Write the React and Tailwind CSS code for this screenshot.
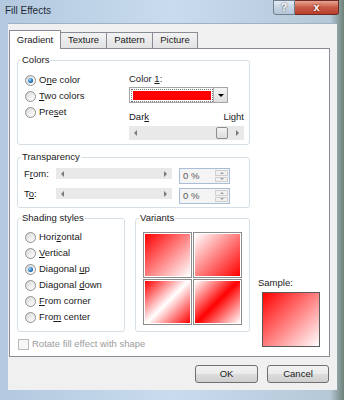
import React from "react";

const Radio = ({ checked }) => (
    <span className="flex h-[11px] w-[11px] shrink-0 items-center justify-center rounded-full border border-[#8e8f8f] bg-[linear-gradient(135deg,#d4d4d4,#f7f7f7_70%,#ffffff)]">
        {checked && (
            <span className="h-[5px] w-[5px] rounded-full bg-[radial-gradient(circle_at_35%_35%,#9fd8ff,#1c6fb5_60%,#0d3d6e)]" />
        )}
    </span>
);

const RadioRow = ({ checked, children }) => (
    <div className="flex h-[16px] items-center gap-[3px]">
        <Radio checked={checked} />
        <span>{children}</span>
    </div>
);

const Group = ({ label, className, children }) => (
    <div className={`relative rounded-[3px] border border-[#d5dfe5] ${className}`}>
        <span className="absolute -top-[8px] left-[3px] bg-white px-[1px] leading-[14px]">
            {label}
        </span>
        {children}
    </div>
);

const LeftArrow = () => (
    <span className="h-0 w-0 border-y-[3px] border-r-[3px] border-y-transparent border-r-[#7a7a7a]" />
);
const RightArrow = () => (
    <span className="h-0 w-0 border-y-[3px] border-l-[3px] border-y-transparent border-l-[#7a7a7a]" />
);

const Slider = ({ thumb, className }) => (
    <div className={`relative flex items-center justify-between bg-[#e9e9e9] px-[5px] ${className}`}>
        <LeftArrow />
        <RightArrow />
        {thumb && (
            <span className="absolute right-[16px] top-[1px] h-[12px] w-[12px] rounded-[2px] border border-[#8d8d8d] bg-[linear-gradient(180deg,#f5f5f5,#dcdcdc)]" />
        )}
    </div>
);

const Spin = () => (
    <div className="flex h-[16px] w-[51px] border border-[#a9bdd6] bg-[#f4f4f4]">
        <span className="flex-1 pl-[3px] leading-[14px] text-[#5a5a5a]">0 %</span>
        <div className="my-[1px] mr-[1px] flex w-[13px] flex-col gap-[1px]">
            <span className="flex flex-1 items-center justify-center border border-[#cfcfcf] bg-[#f0f0f0]">
                <span className="h-0 w-0 border-x-[2px] border-b-[2px] border-x-transparent border-b-[#a0a0a0]" />
            </span>
            <span className="flex flex-1 items-center justify-center border border-[#cfcfcf] bg-[#f0f0f0]">
                <span className="h-0 w-0 border-x-[2px] border-t-[2px] border-x-transparent border-t-[#a0a0a0]" />
            </span>
        </div>
    </div>
);

const Variant = ({ bg }) => (
    <div className="h-[46px] border border-[#8c8c8c] bg-white p-[1px]">
        <div className={`h-full w-full ${bg}`} />
    </div>
);

const App = () => {
    return (
        <div className="h-[400px] w-[344px] overflow-hidden bg-[linear-gradient(90deg,#b3c9df,#c9dcee_50%,#b5c8d8_96%,#6e8279)] font-['Liberation_Sans',Arial,sans-serif] text-[9.5px] text-[#1a1a1a]">
            {/* title bar */}
            <div className="flex h-[23px] items-start justify-between">
                <span className="pl-[5px] pt-[5px] text-[10px] leading-[12px] text-[#1f2a36]">
                    Fill Effects
                </span>
                <div className="mr-[5px] flex">
                    <span className="flex h-[15px] w-[22px] items-center justify-center rounded-bl-[3px] border border-[#6f7d8c] bg-[linear-gradient(180deg,#e3ecf5,#c5d4e3_50%,#b4c6da)] text-[10px] font-bold leading-none text-white [text-shadow:0_0_2px_#333]">
                        ?
                    </span>
                    <span className="flex h-[15px] w-[44px] items-center justify-center rounded-br-[3px] border border-l-0 border-[#6b2a24] bg-[linear-gradient(180deg,#e8a493,#c75a45_50%,#b8402b)] text-[11px] font-bold leading-none text-white [text-shadow:0_0_2px_#400]">
                        x
                    </span>
                </div>
            </div>

            {/* client */}
            <div className="ml-[8px] h-[367px] w-[329px] border-t border-[#9fb1c4] bg-[#f0f0f0]">
                {/* tabs */}
                <div className="ml-[1px] flex h-[24px] items-end">
                    <div className="relative z-10 -mb-[1px] flex h-[19px] w-[52px] items-center justify-center border border-b-0 border-[#898c95] bg-white">
                        Gradient
                    </div>
                    <div className="flex h-[16px] w-[46px] items-center justify-center border border-b-0 border-l-0 border-[#898c95] bg-[linear-gradient(180deg,#f2f2f2,#e3e3e3)]">
                        Texture
                    </div>
                    <div className="flex h-[16px] w-[46px] items-center justify-center border border-b-0 border-l-0 border-[#898c95] bg-[linear-gradient(180deg,#f2f2f2,#e3e3e3)]">
                        Pattern
                    </div>
                    <div className="flex h-[16px] w-[45px] items-center justify-center border border-b-0 border-l-0 border-[#898c95] bg-[linear-gradient(180deg,#f2f2f2,#e3e3e3)]">
                        Picture
                    </div>
                </div>

                {/* panel */}
                <div className="ml-[1px] h-[309px] w-[321px] border border-[#898c95] bg-white pl-[7px] pt-[11px]">
                    <Group label="Colors" className="flex h-[85px] w-[233px]">
                        <div className="w-[111px] pl-[7px] pt-[11px]">
                            <RadioRow checked>
                                O<u>n</u>e color
                            </RadioRow>
                            <RadioRow>
                                <u>T</u>wo colors
                            </RadioRow>
                            <RadioRow>
                                Pre<u>s</u>et
                            </RadioRow>
                        </div>
                        <div className="w-[115px] pt-[11px]">
                            <div className="leading-[14px]">
                                Color <u>1</u>:
                            </div>
                            <div className="mt-[1px] flex h-[16px] w-[99px] border border-[#a5a5a5] bg-white">
                                <div className="flex flex-1 items-center justify-center">
                                    <div className="border border-dotted border-[#777] p-[1px]">
                                        <div className="h-[9px] w-[78px] bg-[#ff0000]" />
                                    </div>
                                </div>
                                <div className="flex w-[14px] items-center justify-center border-l border-[#b0b0b0] bg-[linear-gradient(180deg,#f4f4f4,#dedede)]">
                                    <span className="h-0 w-0 border-x-[3px] border-t-[3px] border-x-transparent border-t-black" />
                                </div>
                            </div>
                            <div className="mt-[7px] flex justify-between leading-[14px]">
                                <span>
                                    Dar<u>k</u>
                                </span>
                                <span>Light</span>
                            </div>
                            <Slider thumb className="mt-[2px] h-[14px] w-[115px]" />
                        </div>
                    </Group>

                    <Group label="Transparency" className="mt-[12px] h-[51px] w-[233px] pl-[6px] pt-[10px]">
                        <div className="flex h-[16px] items-start">
                            <span className="w-[32px] leading-[12px]">
                                F<u>r</u>om:
                            </span>
                            <Slider className="h-[11px] w-[116px]" />
                            <div className="ml-[7px]">
                                <Spin />
                            </div>
                        </div>
                        <div className="mt-[4px] flex h-[16px] items-start">
                            <span className="w-[32px] leading-[12px]">
                                T<u>o</u>:
                            </span>
                            <Slider className="h-[11px] w-[116px]" />
                            <div className="ml-[7px]">
                                <Spin />
                            </div>
                        </div>
                    </Group>

                    <div className="mt-[10px] flex">
                        <div>
                            <div className="flex">
                                <Group label="Shading styles" className="h-[114px] w-[108px] pl-[7px] pt-[10px]">
                                    <RadioRow>
                                        Hori<u>z</u>ontal
                                    </RadioRow>
                                    <RadioRow>
                                        <u>V</u>ertical
                                    </RadioRow>
                                    <RadioRow checked>
                                        Diagonal <u>u</u>p
                                    </RadioRow>
                                    <RadioRow>
                                        Diagonal <u>d</u>own
                                    </RadioRow>
                                    <RadioRow>
                                        <u>F</u>rom corner
                                    </RadioRow>
                                    <RadioRow>
                                        Fro<u>m</u> center
                                    </RadioRow>
                                </Group>
                                <Group label="Variants" className="ml-[10px] h-[114px] w-[115px] pl-[7px] pt-[13px]">
                                    <div className="grid w-[99px] grid-cols-2 gap-[1px]">
                                        <Variant bg="bg-[linear-gradient(135deg,#ff0000,#ffffff)]" />
                                        <Variant bg="bg-[linear-gradient(135deg,#ffffff,#ff0000)]" />
                                        <Variant bg="bg-[linear-gradient(135deg,#ff0000,#ffffff_50%,#ff0000)]" />
                                        <Variant bg="bg-[linear-gradient(135deg,#ffffff,#ff0000_50%,#ffffff)]" />
                                    </div>
                                </Group>
                            </div>
                            <div className="ml-[1px] mt-[5px] flex items-center gap-[3px] text-[#9c9c9c]">
                                <span className="h-[11px] w-[11px] border border-[#b9b9b9] bg-[#f6f6f6]" />
                                <span>Rotate fill effect with shape</span>
                            </div>
                        </div>
                        <div className="ml-[8px] pt-[58px]">
                            <div className="leading-[14px]">Sample:</div>
                            <div className="ml-[4px] mt-[2px] h-[55px] w-[58px] border border-[#5a5a5a] bg-[linear-gradient(135deg,#ff0000,#ffffff)]" />
                        </div>
                    </div>
                </div>

                {/* buttons */}
                <div className="mt-[8px] flex justify-end gap-[9px] pr-[8px]">
                    <button className="h-[18px] w-[63px] rounded-[3px] border border-[#707070] bg-[linear-gradient(180deg,#f2f2f2,#ebebeb_50%,#dddddd_51%,#cfcfcf)] text-[9.5px]">
                        OK
                    </button>
                    <button className="h-[18px] w-[62px] rounded-[3px] border border-[#707070] bg-[linear-gradient(180deg,#f2f2f2,#ebebeb_50%,#dddddd_51%,#cfcfcf)] text-[9.5px]">
                        Cancel
                    </button>
                </div>
            </div>
        </div>
    );
};

export default App;
